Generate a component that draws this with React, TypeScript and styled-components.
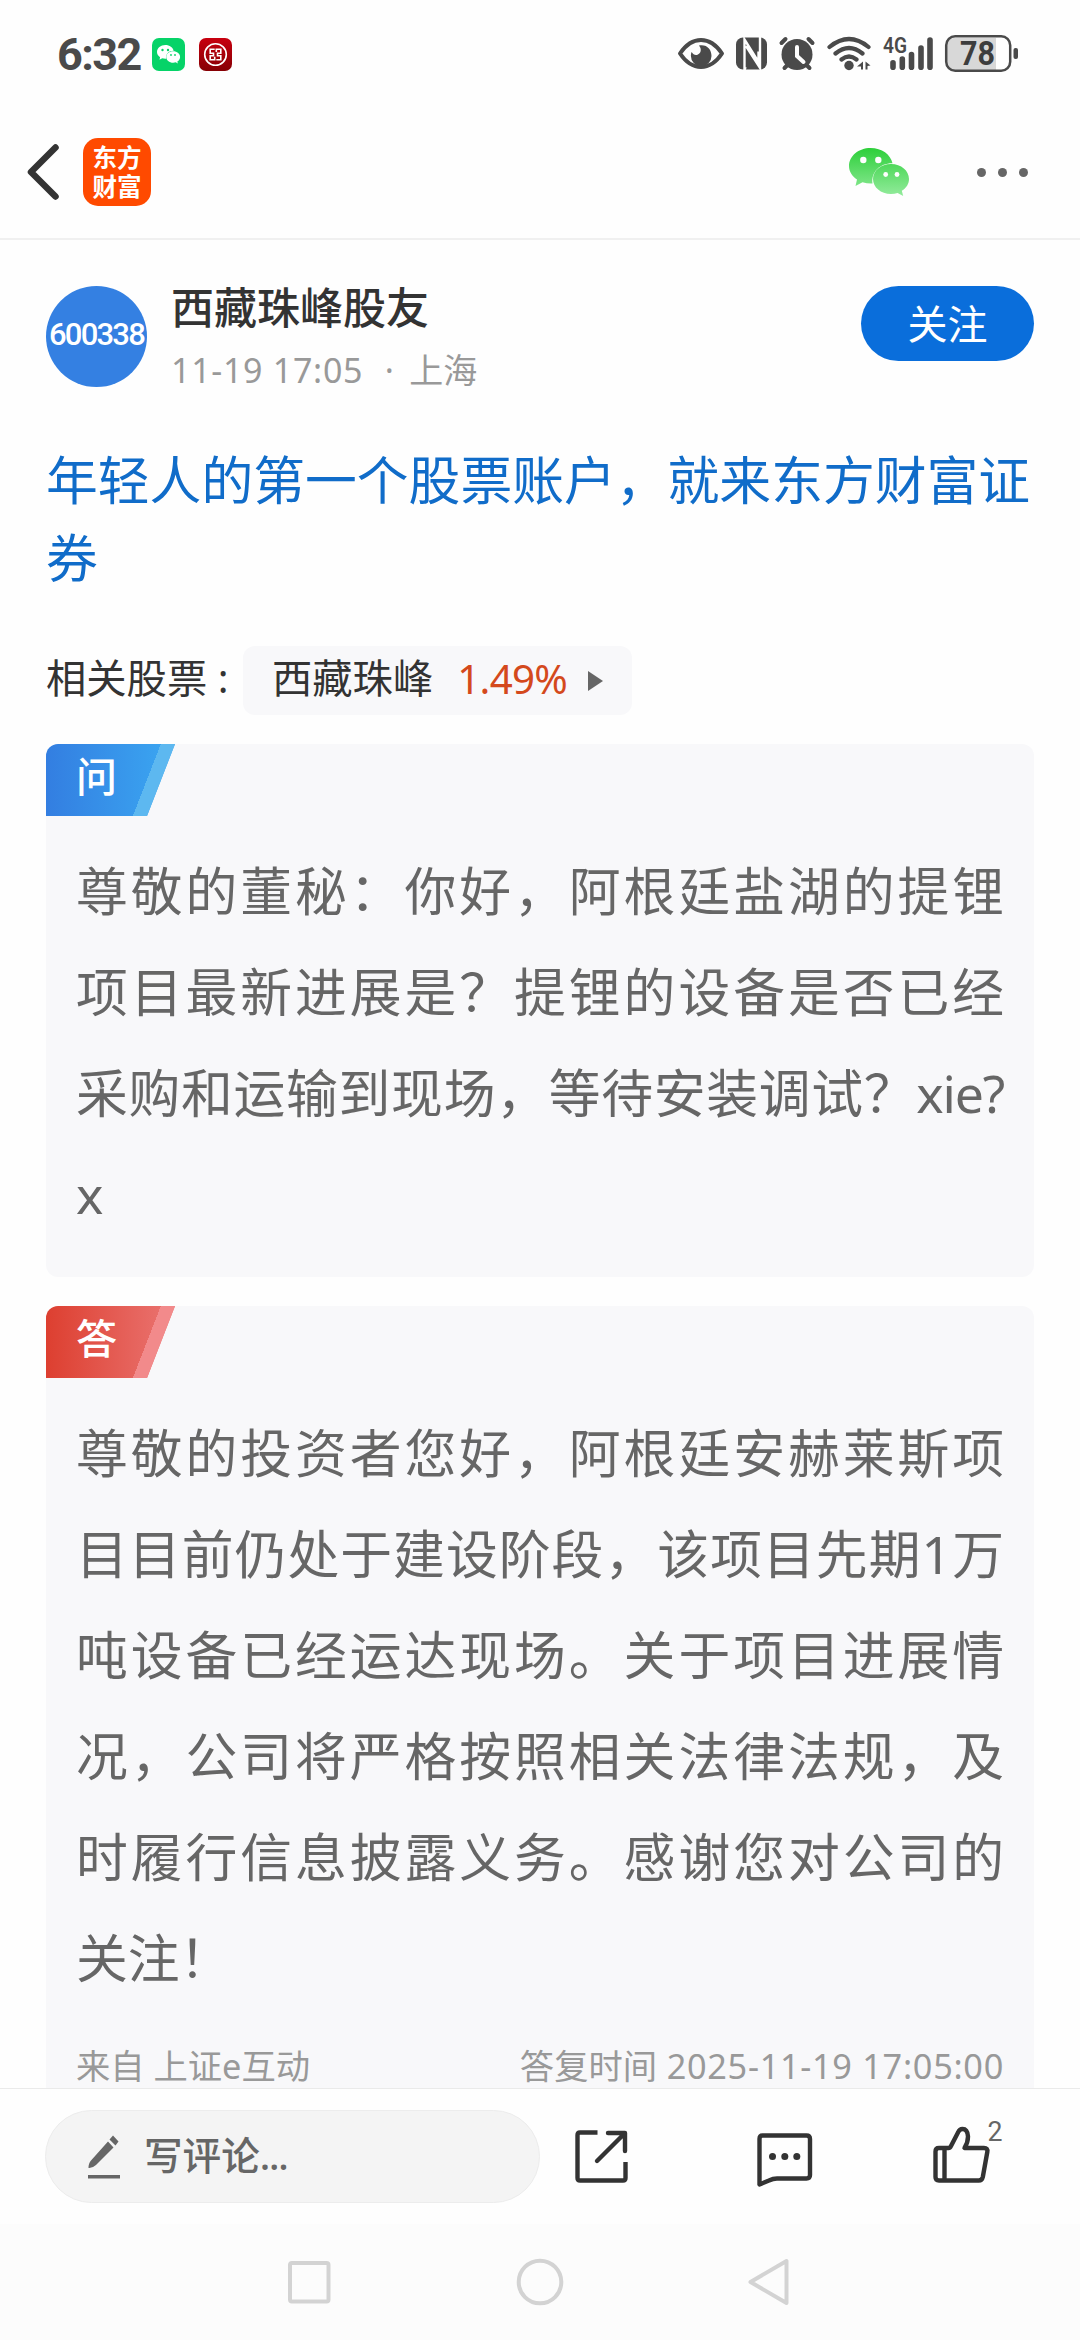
import React from "react";
import styled, { createGlobalStyle } from "styled-components";

const Global = createGlobalStyle`
  * { box-sizing: border-box; }
  html, body { margin: 0; padding: 0; background: #fefefe; }
  body { font-family: "Noto Sans", "Noto Sans CJK SC", sans-serif; text-spacing-trim: space-all; }
`;

const Screen = styled.div`
  width: 1080px;
  height: 2340px;
  display: flex;
  flex-direction: column;
  overflow: hidden;
  background: #fefefe;
  color: #333;
`;

const StatusBar = styled.div`
  height: 108px;
  flex: none;
  display: flex;
  align-items: center;
  justify-content: space-between;
  padding: 0 60px 0 57px;
`;
const StatusGroup = styled.div`
  display: flex;
  align-items: center;
`;
const Clock = styled.div`
  width: 95px;
  font: 700 45px/54px Roboto, sans-serif;
  letter-spacing: -1.6px;
  padding-top: 2px;
  color: #4a4a4a;
`;
const AppBadge = styled.svg`
  display: block;
  width: 33px;
  height: 33px;
  margin-right: 14px;
`;
const StatusIcons = styled.svg`
  display: block;
  width: 345px;
  height: 44px;
`;

const NavBar = styled.div`
  height: 132px;
  flex: none;
  display: flex;
  align-items: center;
  justify-content: space-between;
  border-bottom: 2px solid #f0f0f0;
  padding: 0 52px 2px 25px;
`;
const NavGroup = styled.div`
  display: flex;
  align-items: center;
`;
const AppLogo = styled.div`
  width: 68px;
  height: 68px;
  margin-left: 22px;
  border-radius: 15px;
  background: #ff4a00;
  color: #fff;
  display: grid;
  place-content: center;
  text-align: center;
  padding-bottom: 2px;
  font: 700 24.5px/29px "Noto Sans CJK SC", sans-serif;
`;
const MoreDots = styled.div`
  display: flex;
  gap: 12px;
  margin-left: 68px;
`;
const Dot = styled.i`
  width: 9px;
  height: 9px;
  border-radius: 50%;
  background: #666;
`;

const Content = styled.main`
  flex: 1;
  min-height: 0;
  overflow: hidden;
  padding: 46px 46px 0;
`;
const Author = styled.div`
  display: flex;
  align-items: flex-start;
  height: 101px;
`;
const Avatar = styled.div`
  width: 101px;
  height: 101px;
  flex: none;
  border-radius: 50%;
  background: #3480e2;
  color: #fff;
  display: grid;
  place-items: center;
  font: 500 31px/36px Roboto, sans-serif;
  letter-spacing: -1.8px;
  padding-bottom: 4px;
`;
const AuthorText = styled.div`
  flex: 1;
  margin-left: 24px;
`;
const AuthorName = styled.div`
  font-size: 43px;
  line-height: 44px;
  font-weight: 500;
`;
const AuthorMeta = styled.div`
  display: flex;
  margin-top: 18px;
  font-size: 34px;
  line-height: 44px;
  color: #999;
`;
const Figures = styled.span`
  letter-spacing: 0.7px;
`;
const Separator = styled.span`
  width: 46px;
  padding-left: 6px;
  text-align: center;
`;
const FollowButton = styled.button`
  width: 173px;
  height: 75px;
  border: 0;
  border-radius: 38px;
  background: #0a6edb;
  color: #fff;
  font: 400 40px/60px "Noto Sans CJK SC", sans-serif;
  padding: 0 0 4px;
`;
const Title = styled.h1`
  margin: 54px 0 0;
  font-size: 51.8px;
  line-height: 78px;
  font-weight: 400;
  color: #106cc9;
`;
const Related = styled.div`
  display: flex;
  align-items: center;
  height: 69px;
  margin: 49px 0 29px;
  font-size: 40.3px;
  line-height: 60px;
`;
const RelatedLabel = styled.span`
  padding-bottom: 5px;
  white-space: pre;
`;
const StockChip = styled.div`
  width: 389px;
  height: 69px;
  margin-left: auto;
  margin-right: 402px;
  padding-left: 29px;
  border-radius: 12px;
  background: #f8f8fa;
  display: flex;
  align-items: center;
`;
const StockName = styled.span`
  padding-bottom: 5px;
`;
const Change = styled.span`
  margin-left: 24px;
  width: 108px;
  padding-bottom: 4px;
  color: #d4491c;
  letter-spacing: -0.7px;
`;
const Caret = styled.i`
  margin-left: 23px;
  border-left: 15px solid #666;
  border-top: 10px solid transparent;
  border-bottom: 10px solid transparent;
`;

const Card = styled.section<{ $h: number }>`
  background: #f8f8fa;
  border-radius: 12px;
  overflow: hidden;
  margin-bottom: 29px;
  height: ${(p) => p.$h}px;
`;
const Tab = styled.div<{ $from: string; $to: string; $edge: string }>`
  width: 129px;
  height: 72px;
  display: flex;
  align-items: center;
  background: ${(p) =>
    `linear-gradient(111.25deg, transparent 0 107px, ${p.$edge} 107px), linear-gradient(90deg, ${p.$from}, ${p.$to} 115px)`};
  clip-path: polygon(0 0, 129px 0, 101px 72px, 0 72px);
  color: #fff;
  font-size: 41px;
  font-weight: 500;
  line-height: 60px;
  padding: 0 0 8px 30px;
`;
const Body = styled.div`
  padding: 25px 30px 0;
  font-size: 51.8px;
  line-height: 101px;
  color: #666;
`;
const Line = styled.div<{ $last?: boolean }>`
  height: 101px;
  white-space: nowrap;
  text-align: justify;
  text-align-last: ${(p) => (p.$last ? "left" : "justify")};
`;
const Tight = styled.span`
  letter-spacing: -1.2px;
`;
const Source = styled.div`
  display: flex;
  justify-content: space-between;
  padding: 33px 30px 0;
  font-size: 34.3px;
  line-height: 48px;
  color: #999;
`;

const BottomBar = styled.footer`
  height: 136px;
  flex: none;
  display: flex;
  align-items: flex-start;
  border-top: 1px solid #eaeaea;
  padding: 21px 0 0 45px;
`;
const CommentBox = styled.div`
  width: 495px;
  height: 93px;
  border: 1px solid #ececec;
  border-radius: 47px;
  background: #f4f4f4;
  display: flex;
  align-items: center;
  padding-left: 42px;
  color: #666;
`;
const Placeholder = styled.span`
  margin-left: 22px;
  padding-bottom: 3px;
  font-size: 38.6px;
  line-height: 60px;
  font-weight: 500;
`;
const Actions = styled.svg`
  display: block;
  width: 540px;
  height: 93px;
`;
const SystemNav = styled.nav`
  height: 116px;
  flex: none;
  background: #fcfcfc;
`;

const Bubbles = ({ fill }: { fill: string }) => (
  <>
    <path fill={fill} d="M21.500 0C9.600 0 0 8 0 18c0 5.500 3 10 8 13.500L6.500 38l7-3.700c2.800.8 5.500 1.200 8.500 1.200h1.500C22 24 31 15 43.500 15.200 41.500 6.500 33 0 21.500 0Z" />
    <path fill={fill} d="M42 16c-10.200 0-18 6.700-18 15s7.800 15 18 15c2.300 0 4.600-.3 6.600-1l5.600 3-1.400-5.200C57.400 40 60 35.800 60 31c0-8.300-7.800-15-18-15Z" />
  </>
);

const App = () => (
  <Screen lang="zh-CN">
    <Global />
    <StatusBar>
      <StatusGroup>
        <Clock>6:32</Clock>
        <AppBadge viewBox="0 0 33 33">
          <rect width="33" height="33" rx="7" fill="#06d368" />
          <g transform="translate(5 7) scale(.385)"><Bubbles fill="#fff" /></g>
          <g fill="#06d368"><circle cx="10.500" cy="12" r="1.200" /><circle cx="16" cy="12" r="1.200" /><circle cx="19" cy="17" r=".9" /><circle cx="23" cy="17" r=".9" /></g>
        </AppBadge>
        <AppBadge viewBox="0 0 33 33">
          <defs><linearGradient id="bank" x2="0" y2="1"><stop stopColor="#c8000f" /><stop offset="1" stopColor="#860004" /></linearGradient></defs>
          <rect width="33" height="33" rx="7" fill="url(#bank)" />
          <g fill="none" stroke="#fff" strokeWidth="1.600">
            <circle cx="16.500" cy="16.500" r="10.800" />
            <path d="M15.700 11.200h-4.500v4h3.300v2.600h-3.300v4h4.500v-3M17.300 14v-2.800h4.500v4h-3.300v2.600h3.300v4h-4.500" />
          </g>
        </AppBadge>
      </StatusGroup>
      <StatusIcons viewBox="675 32 345 44">
        <path fill="none" stroke="#4a4a4a" strokeWidth="4" strokeLinejoin="round" d="M680 53.500Q689 40 701 40t21 13.500Q713 67 701 67t-21-13.500Z" />
        <path fill="#4a4a4a" d="M699 45.500C707 44 711.500 49.500 711.500 56a10.300 10.300 0 0 1-20.600 0c0-1.500.2-3 .8-4 1.300 2.500 3.500 3.500 5.800 2.700 3.500-1.200 4.500-5.500 1.500-9.200Z" />
        <rect x="736" y="37.500" width="31" height="32" rx="7" fill="#4a4a4a" />
        <path fill="none" stroke="#fefefe" strokeWidth="2.400" d="M744.500 70V39.500l14 22.500V51.500M760 37v31L746 46M744.500 70l1-3" />
        <circle cx="797" cy="54.500" r="15.500" fill="#4a4a4a" />
        <g fill="none" stroke="#4a4a4a" strokeWidth="4" strokeLinecap="round">
          <path d="M781.500 43l4-4M812.500 43l-4-4M784.500 68l4-4M809.500 68l-4-4" />
        </g>
        <path d="M797 47v9l6.500 6" fill="none" stroke="#fefefe" strokeWidth="4" strokeLinecap="round" />
        <g fill="none" stroke="#4a4a4a" strokeWidth="4.200" strokeLinecap="round">
          <path d="M829.500 47q19.500-16 39 0M835.500 53.500q13.500-11 27 0M841.500 59.500q7.500-6 15 0" />
        </g>
        <circle cx="849" cy="65.500" r="4.700" fill="#4a4a4a" />
        <path fill="#4a4a4a" d="M863 61.500v8h-2v-3h-4zM865.500 61.500l5 4-3 .5v3.500h-2z" />
        <text x="883" y="53" fontFamily="Roboto, sans-serif" fontWeight="600" fontSize="22" textLength="24" lengthAdjust="spacingAndGlyphs" fill="#4a4a4a">4G</text>
        <g stroke="#4a4a4a" strokeWidth="5.600" strokeLinecap="round">
          <path d="M893 62.800v4.500M902.300 59v8.300M911.500 54.500v12.800M921 48v19.300M930 40v27.300" />
        </g>
        <path fill="#d8d8d8" d="M954 38h42v32h-42q-7 0-7-7V45q0-7 7-7Z" />
        <rect x="946.200" y="36.200" width="64" height="34.600" rx="9" fill="none" stroke="#4a4a4a" strokeWidth="2.500" />
        <rect x="1013.500" y="48" width="4.500" height="11" rx="2" fill="#4a4a4a" />
        <text x="960" y="65" fontFamily="Roboto, sans-serif" fontWeight="700" fontSize="32.500" textLength="35" lengthAdjust="spacingAndGlyphs" fill="#3d3d3d">78</text>
      </StatusIcons>
    </StatusBar>

    <NavBar>
      <NavGroup>
        <svg width="36" height="60" viewBox="0 0 36 60" fill="none" stroke="#333" strokeWidth="6.500" strokeLinecap="round" strokeLinejoin="round">
          <path d="M30.500 5.500 6 30l24.500 24.500" />
        </svg>
        <AppLogo>东方<br />财富</AppLogo>
      </NavGroup>
      <NavGroup>
        <svg width="60" height="49" viewBox="0 0 60 49">
          <defs><linearGradient id="chat" gradientUnits="userSpaceOnUse" x1="0" y1="0" x2="0" y2="48"><stop stopColor="#2dcf3a" /><stop offset="1" stopColor="#93eb9c" /></linearGradient></defs>
          <Bubbles fill="url(#chat)" />
          <g fill="#fefefe"><circle cx="14.300" cy="12" r="3.200" /><circle cx="29.300" cy="12" r="3.200" /><circle cx="36.700" cy="26.500" r="2.400" /><circle cx="48" cy="26.500" r="2.400" /></g>
        </svg>
        <MoreDots><Dot /><Dot /><Dot /></MoreDots>
      </NavGroup>
    </NavBar>

    <Content>
      <Author>
        <Avatar>600338</Avatar>
        <AuthorText>
          <AuthorName>西藏珠峰股友</AuthorName>
          <AuthorMeta><Figures>11-19 17:05</Figures><Separator>·</Separator>上海</AuthorMeta>
        </AuthorText>
        <FollowButton>关注</FollowButton>
      </Author>
      <Title>年轻人的第一个股票账户，就来东方财富证券</Title>
      <Related>
        <RelatedLabel>相关股票 :</RelatedLabel>
        <StockChip><StockName>西藏珠峰</StockName><Change>1.49%</Change><Caret /></StockChip>
      </Related>
      <Card $h={533}>
        <Tab $from="#337ee1" $to="#3aa3f0" $edge="#5db8f0">问</Tab>
        <Body>
          <Line>尊敬的董秘：你好，阿根廷盐湖的提锂</Line>
          <Line>项目最新进展是？提锂的设备是否已经</Line>
          <Line>采购和运输到现场，等待安装调试？<Tight>xie?</Tight></Line>
          <Line $last>x</Line>
        </Body>
      </Card>
      <Card $h={900}>
        <Tab $from="#dd3f30" $to="#e96f6b" $edge="#f28a8b">答</Tab>
        <Body>
          <Line>尊敬的投资者您好，阿根廷安赫莱斯项</Line>
          <Line>目目前仍处于建设阶段，该项目先期1万</Line>
          <Line>吨设备已经运达现场。关于项目进展情</Line>
          <Line>况，公司将严格按照相关法律法规，及</Line>
          <Line>时履行信息披露义务。感谢您对公司的</Line>
          <Line $last>关注！</Line>
        </Body>
        <Source><span>来自 上证e互动</span><span>答复时间<Figures> 2025-11-19 17:05:00</Figures></span></Source>
      </Card>
    </Content>

    <BottomBar>
      <CommentBox>
        <svg width="34" height="46" viewBox="0 0 34 46" fill="#666">
          <path d="M25 1.500 30.500 7.500 27.500 11.500 21.500 5.500ZM20 7.500 25.500 13.500 8 31Q4 34.500.5 34 .5 29 3 26.500ZM0 41h32v3.500H0Z" />
        </svg>
        <Placeholder>写评论<Tight>...</Tight></Placeholder>
      </CommentBox>
      <Actions viewBox="540 2110 540 93" fill="none" stroke="#333" strokeWidth="4.400" strokeLinejoin="round">
        <path d="M597.500 2132.500H580q-2.500 0-2.500 2.500v43q0 2.500 2.500 2.500h43q2.500 0 2.500-2.500v-16" />
        <path strokeLinecap="round" d="M608 2133h17v18M624 2134l-27 27" />
        <path d="M762.500 2135.500h44q3.500 0 3.500 3.500v36q0 3.500-3.500 3.500H777q-4 0-8 2l-9.500 4v-45.500q0-3.500 3-3.500Z" />
        <g fill="#333" stroke="none"><circle cx="772.500" cy="2156.500" r="3.500" /><circle cx="784.800" cy="2156.500" r="3.500" /><circle cx="796.800" cy="2156.500" r="3.500" /></g>
        <path d="M939 2148h9.500q1.500 0 2.500-2l7-13.500q1.500-3.500 4.500-3.500 5 0 5.500 7.500 0 6-3.500 11.500h19.500q4 0 3.300 4l-4.500 25q-.8 3.500-4 3.500H939q-3.500 0-3.500-3.500v-25.500q0-3.500 3.500-3.500ZM944.500 2149v31" />
        <text x="987.500" y="2141" fontFamily="Roboto, sans-serif" fontSize="28" fill="#666" stroke="none" textLength="15" lengthAdjust="spacingAndGlyphs">2</text>
      </Actions>
    </BottomBar>
    <SystemNav>
      <svg width="1080" height="116" viewBox="0 2224 1080 116" fill="none" stroke="#d3d3d3" strokeWidth="4" strokeLinejoin="round">
        <rect x="290" y="2263" width="38.500" height="38.500" rx="2" />
        <circle cx="540" cy="2282" r="21.300" />
        <path d="M786.500 2261v42l-36-21Z" />
      </svg>
    </SystemNav>
  </Screen>
);

export default App;
